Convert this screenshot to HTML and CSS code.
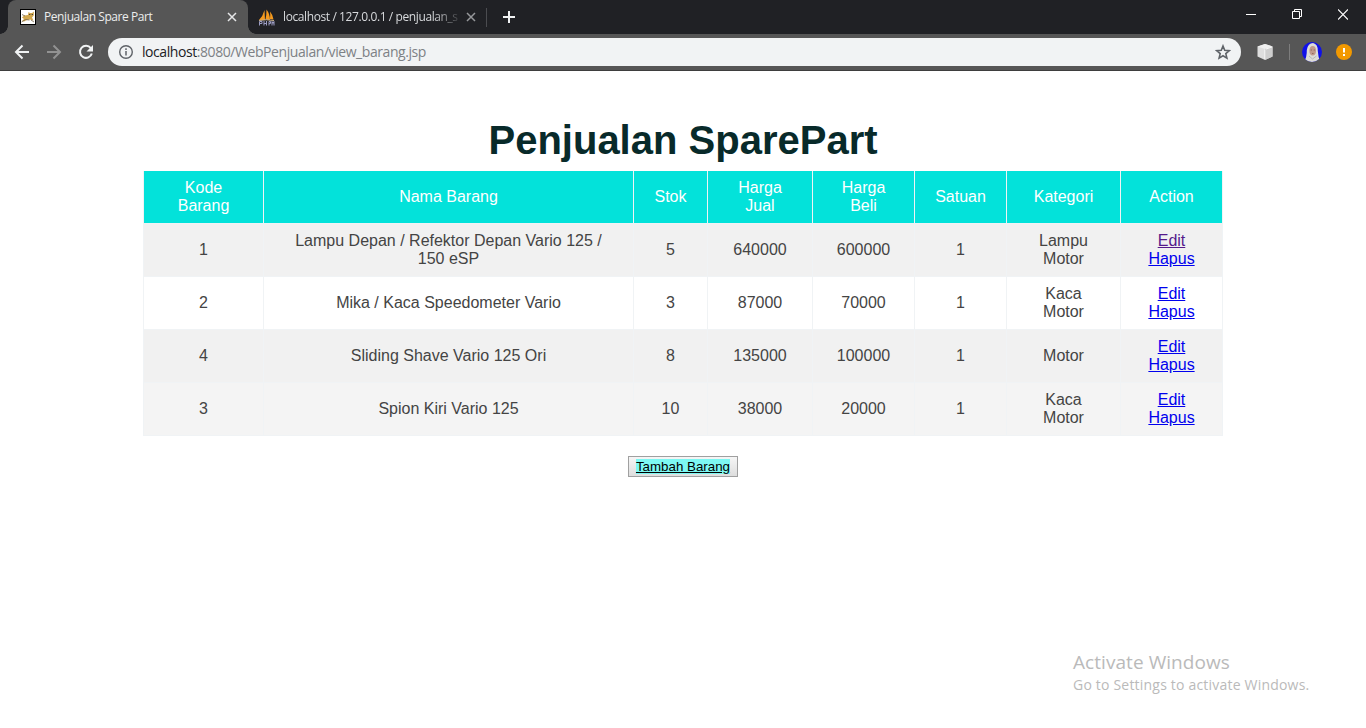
FILE: index.html
```html
<!DOCTYPE html>
<html lang="id">
<head>
<meta charset="utf-8">
<title>Penjualan Spare Part</title>
<link rel="stylesheet" href="styles.css">
</head>
<body>
<header class="browser">
  <div class="tabstrip">
    <div class="tab tab-active">
      <svg class="favicon" width="16" height="16" viewBox="0 0 16 16"><rect x=".5" y=".5" width="15" height="15" fill="#fff" stroke="#000"/><path d="M2 12l2-2-2-1.500 2-2 4-.5.500-3 1.500 1h2l2-1.500-.3 4-1.700 2 1.500 3-3.500-1-3 .5-3 1.500z" fill="#d2a850"/><path d="M1.500 13l4-2.500 4 .5M2 5.500l3 1.500M11 11l3 2" stroke="#77664c" stroke-width=".8" fill="none"/><path d="M9 5.500h1.300M11.700 5.500H13" stroke="#4c4434" stroke-width="1"/></svg>
      <span class="tab-title title-one">Penjualan Spare Part</span>
      <svg class="tab-close" width="10" height="10" viewBox="0 0 10 10"><path d="M1 1l8 8M9 1L1 9" stroke="#e6e7e8" stroke-width="1.500"/></svg>
    </div>
    <div class="tab tab-second">
      <svg class="favicon" width="17" height="17" viewBox="0 0 17 17"><path d="M1 11Q5 7 6.500 1L7 11zM7.500 10.500Q8.500 6 8.500 0.500Q12 5 12 11zM12 10Q12.500 6 12 2.500Q15 6 15.500 10.500z" fill="#f59a1e"/><path d="M1 11.500q7-1.500 15 0" stroke="#c9b28f" fill="none"/><path d="M1.500 16.500v-4h2.500v2h-2M6 12v4.500M6 14.500h2.500M8.500 12v4.500M11 16.500v-4h1.500v2H11M14 16.500v-4l1 2 1-2v4" stroke="#9c9dc4" fill="none"/></svg>
      <span class="tab-title title-two">localhost / 127.0.0.1 / penjualan_s</span>
      <svg class="tab-close" width="10" height="10" viewBox="0 0 10 10"><path d="M1 1l8 8M9 1L1 9" stroke="#96989b" stroke-width="1.500"/></svg>
    </div>
    <span class="tab-divider"></span>
    <svg class="new-tab" width="12" height="12" viewBox="0 0 12 12"><path d="M6 0v12M0 6h12" stroke="#f1f3f4" stroke-width="2"/></svg>
    <div class="window-buttons">
      <svg width="10" height="11" viewBox="0 0 10 11"><path d="M0 5.500h10" stroke="#fff"/></svg>
      <svg width="10" height="11" viewBox="0 0 10 11"><path d="M.5 3h7v7h-7zM2.500 3V1h7v7h-2" transform="translate(0 -.5)" stroke="#fff" fill="none"/></svg>
      <svg width="10" height="11" viewBox="0 0 10 11"><path d="M0 .5l10 10M10 .5l-10 10" stroke="#fff" stroke-width="1.200"/></svg>
    </div>
  </div>
  <div class="toolbar">
    <svg class="nav-icon" width="16" height="16" viewBox="0 0 16 16"><path d="M15 8H2M8.500 1.500L2 8l6.500 6.500" stroke="#f1f3f4" stroke-width="2" fill="none"/></svg>
    <svg class="nav-icon" width="16" height="16" viewBox="0 0 16 16"><path d="M1 8h13M7.500 1.500L14 8l-6.500 6.500" stroke="#929292" stroke-width="2" fill="none"/></svg>
    <svg class="nav-icon" width="16" height="16" viewBox="0 0 16 16"><path d="M12.800 4.200A6 6 0 1 0 13.800 9.500" stroke="#f1f3f4" stroke-width="2" fill="none"/><path d="M15 1v6.500H8.500z" fill="#f1f3f4"/></svg>
    <div class="address">
      <svg width="16" height="16" viewBox="0 0 16 16"><circle cx="8" cy="8" r="6.300" stroke="#5f6368" stroke-width="1.400" fill="none"/><path d="M8 7v4.500M8 4.300v1.600" stroke="#5f6368" stroke-width="1.500"/></svg>
      <span class="url"><span class="url-host">localhost</span>:8080/WebPenjualan/view_barang.jsp</span>
      <svg class="star" width="16" height="16" viewBox="0 0 16 16"><path d="M8 2l1.700 4.300 4.600.3-3.500 3 1.100 4.500L8 11.700l-3.900 2.400 1.100-4.500-3.500-3 4.600-.3z" stroke="#5f6368" stroke-width="1.600" fill="none"/></svg>
    </div>
    <svg class="cube" width="16" height="16" viewBox="0 0 16 16"><path d="M8 0l7.500 2.500v10L8 16 .5 12.500v-10z" fill="#dedede"/><path d="M.5 2.500L8 0l7.500 2.500L8 5z" fill="#efefef"/><path d="M8 5l7.500-2.500v10L8 16z" fill="#cecece"/><path d="M7.800 5.500V15M9 5l6-2" stroke="#f6f6f6" stroke-width="1"/></svg>
    <span class="bar-divider"></span>
    <svg class="avatar" width="20" height="20" viewBox="0 0 20 20"><defs><clipPath id="round"><circle cx="10" cy="10" r="10"/></clipPath></defs><g clip-path="url(#round)"><path d="M0 0h20v20H0z" fill="#1010e8"/><path d="M2 20Q5 15 4.800 8Q6 1 11 1Q16 2 15.800 9Q16 15 18.500 20z" fill="#dddcd8"/><ellipse cx="10.700" cy="8.800" rx="3.300" ry="4.800" fill="#c09a8c"/><path d="M8.700 8h1.300M11.700 8H13M10 11.500h1.500" stroke="#7c564e" stroke-width=".7"/><path d="M7 14l3.500 3 4-3" stroke="#b8b8b4" fill="none"/></g></svg>
    <svg class="alert" width="16" height="16" viewBox="0 0 16 16"><circle cx="8" cy="8" r="8" fill="#f29900"/><path d="M8 4v4.500M8 10v2" stroke="#fff" stroke-width="2"/></svg>
  </div>
</header>
<main class="page">
  <h1 class="heading">Penjualan SparePart</h1>
  <table class="goods">
    <colgroup><col class="c-code"><col class="c-name"><col class="c-stock"><col class="c-sell"><col class="c-buy"><col class="c-unit"><col class="c-cat"><col class="c-act"></colgroup>
    <thead>
      <tr><th>Kode<br>Barang</th><th>Nama Barang</th><th>Stok</th><th>Harga<br>Jual</th><th>Harga<br>Beli</th><th>Satuan</th><th>Kategori</th><th>Action</th></tr>
    </thead>
    <tbody>
      <tr class="shaded"><td>1</td><td>Lampu Depan / Refektor Depan Vario 125 /<br>150 eSP</td><td>5</td><td>640000</td><td>600000</td><td>1</td><td>Lampu<br>Motor</td><td><a class="visited" href="#">Edit</a><br><a href="#">Hapus</a></td></tr>
      <tr><td>2</td><td>Mika / Kaca Speedometer Vario</td><td>3</td><td>87000</td><td>70000</td><td>1</td><td>Kaca<br>Motor</td><td><a href="#">Edit</a><br><a href="#">Hapus</a></td></tr>
      <tr class="shaded"><td>4</td><td>Sliding Shave Vario 125 Ori</td><td>8</td><td>135000</td><td>100000</td><td>1</td><td>Motor</td><td><a href="#">Edit</a><br><a href="#">Hapus</a></td></tr>
      <tr class="hovered"><td>3</td><td>Spion Kiri Vario 125</td><td>10</td><td>38000</td><td>20000</td><td>1</td><td>Kaca<br>Motor</td><td><a href="#">Edit</a><br><a href="#">Hapus</a></td></tr>
    </tbody>
  </table>
  <button class="add"><a class="add-link" href="#">Tambah Barang</a></button>
</main>
<aside class="watermark">
  <p class="wm-title">Activate Windows</p>
  <p class="wm-text">Go to Settings to activate Windows.</p>
</aside>
</body>
</html>
```
FILE: styles.css
```css
* { box-sizing: border-box; }
body { margin: 0; height: 728px; overflow: hidden; background: #fff; font-family: "Liberation Sans", Arial, sans-serif; }
svg { display: block; flex: none; }

.browser { height: 71px; background: #565656; border-bottom: 1px solid #3e3e3e; font-family: "Open Sans", "Noto Sans", sans-serif; }
.tabstrip { display: flex; align-items: center; height: 34px; background: #202125; padding-left: 8px; }
.tab { display: flex; align-items: center; height: 34px; }
.tab-active { position: relative; width: 240px; padding: 0 11px 0 12px; background: #565656; border-radius: 8px 8px 0 0; }
.tab-active::before, .tab-active::after { content: ""; position: absolute; bottom: 0; width: 8px; height: 8px; }
.tab-active::before { left: -8px; background: radial-gradient(circle at 0 0, #202125 7.5px, #565656 8px); }
.tab-active::after { right: -8px; background: radial-gradient(circle at 100% 0, #202125 7.5px, #565656 8px); }
.tab-second { width: 238px; padding: 0 10px 0 10px; }
.tab-title { font-size: 12px; line-height: 16px; white-space: nowrap; }
.title-one { margin-left: 8px; color: #eceded; letter-spacing: -0.43px; }
.title-two { width: 182px; margin-left: 8px; color: #d8dadd; letter-spacing: -0.4px; mask-image: linear-gradient(90deg, #000 150px, transparent 180px); }
.tab-close { margin-left: auto; }
.tab-divider { width: 1px; height: 19px; background: #4b4c50; }
.new-tab { margin-left: 16px; }
.window-buttons { display: flex; gap: 36px; margin-left: auto; padding: 0 18px 6px 0; }

.toolbar { display: flex; align-items: center; height: 36px; padding-left: 14px; }
.nav-icon { margin-right: 16px; }
.address { display: flex; align-items: center; width: 1133px; height: 28px; margin-left: -2px; padding: 0 10px; border-radius: 14px; background: #f1f3f4; }
.url { margin-left: 8px; font-size: 14px; line-height: 20px; letter-spacing: -0.43px; color: #7d8185; }
.url-host { color: #202124; }
.star { margin-left: auto; }
.cube { margin-left: 16px; }
.bar-divider { width: 1px; height: 16px; margin-left: 16px; background: #7d7d7d; }
.avatar { margin-left: 12px; }
.alert { margin-left: 14px; }

.page { display: flex; flex-direction: column; align-items: center; padding-top: 46px; }
.heading { margin: 0; height: 54px; font-size: 40px; line-height: 46px; color: #082a2a; }
.goods { width: 1080px; table-layout: fixed; border-spacing: 0; font-size: 16px; line-height: 18px; text-align: center; color: #444; }
.goods th, .goods td { height: 53px; padding: 0; border-right: 1px solid #f0f3f5; border-bottom: 1px solid #f0f3f5; font-weight: 400; vertical-align: middle; }
.goods th:first-child, .goods td:first-child { border-left: 1px solid #f0f3f5; }
.goods th { background: #03e2da; background-clip: padding-box; color: #fff; }
.shaded { background: #f1f1f1; }
.hovered { background: #f4f4f4; }
.c-code { width: 121px; }
.c-name { width: 370px; }
.c-stock { width: 74px; }
.c-sell { width: 105px; }
.c-buy { width: 102px; }
.c-unit { width: 92px; }
.c-cat { width: 114px; }
.c-act { width: 102px; }
.goods a { color: #0000ee; }
.goods .visited { color: #551a8b; }
.add { width: 110px; height: 21px; margin-top: 20px; padding: 0; border: 1px solid #a0a0a0; background: linear-gradient(#f6f6f6, #dedede); font-family: inherit; font-size: 13.333px; line-height: 15px; }
.add-link { background: #7df8f3; color: #000; }

.watermark { position: absolute; left: 1073px; top: 650px; font-family: "Open Sans", "Noto Sans", sans-serif; color: #bababa; white-space: nowrap; }
.watermark p { margin: 0; }
.wm-title { font-size: 19px; line-height: 24px; letter-spacing: 0.06px; }
.wm-text { font-size: 14px; line-height: 22px; letter-spacing: 0.2px; }
```
